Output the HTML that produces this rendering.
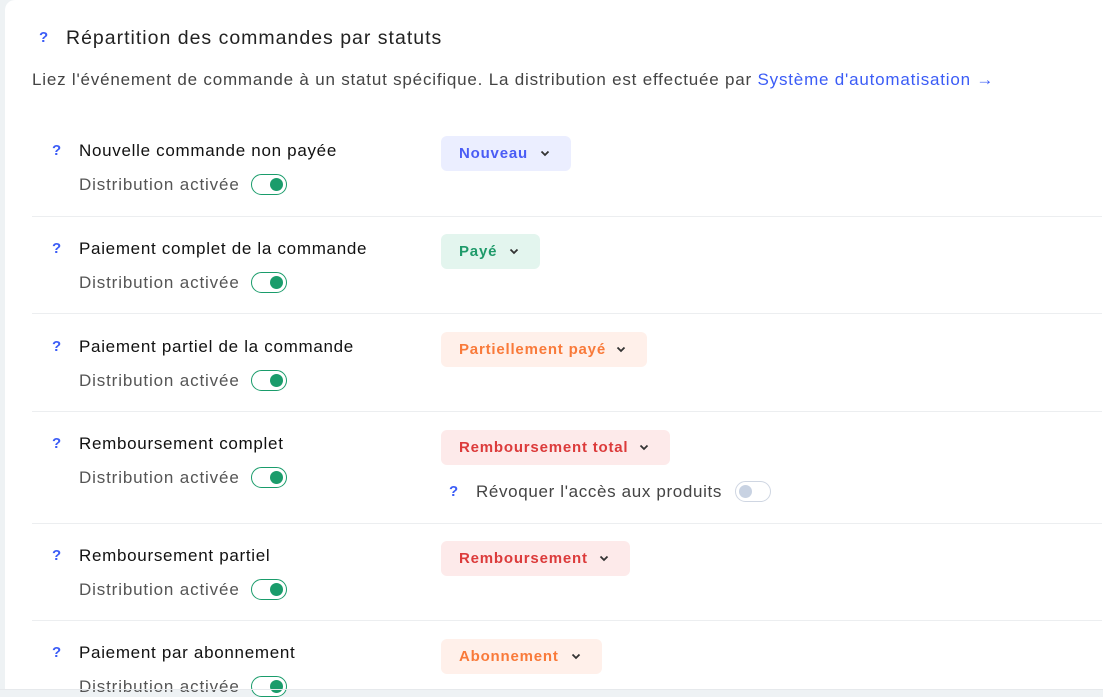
<!DOCTYPE html>
<html><head><meta charset="utf-8">
<style>
*{margin:0;padding:0;box-sizing:border-box}
body{width:1103px;height:690px;overflow:hidden;background:#eef2f4;font-family:"Liberation Sans",sans-serif;position:relative}
.card{position:absolute;left:5px;top:0;width:1098px;height:689px;background:#fff;border-radius:10px 0 0 0}
.a{position:absolute;white-space:nowrap}
.q{color:#3b5cf6;font-weight:bold;font-size:15px}
.lbl{font-size:17px;color:#111;letter-spacing:0.7px}
.dist{font-size:17px;color:#555;letter-spacing:0.85px}
.sep{position:absolute;left:32px;width:1070px;height:1px;background:#eceef0}
.tg{position:absolute;width:36px;height:21px;border:1.5px solid #1a9c6b;border-radius:11px;background:#fff}
.tg::after{content:"";position:absolute;right:3px;top:2.5px;width:13px;height:13px;border-radius:50%;background:#1a9c6b}
.tg.off{border-color:#cfd6e2}
.tg.off::after{left:3px;right:auto;background:#c8d2e2}
.b{position:absolute;left:441px;height:35px;border-radius:6px;font-weight:bold;font-size:15px;line-height:35px;padding-left:18px;letter-spacing:0.8px}
.b svg{position:absolute;top:14px}
</style></head><body>
<div class="card"></div>
<div class="a q" style="left:39px;top:29px">?</div>
<div class="a" style="left:66px;top:27px;font-size:19.5px;color:#222;letter-spacing:1px">Répartition des commandes par statuts</div>
<div class="a" style="left:32px;top:70px;font-size:17px;color:#444;letter-spacing:0.8px">Liez l'événement de commande à un statut spécifique. La distribution est effectuée par <span style="color:#3b5cf6">Système d'automatisation →</span></div>

<div class="a q" style="left:52px;top:142px">?</div>
<div class="a lbl" style="left:79px;top:141px">Nouvelle commande non payée</div>
<div class="a dist" style="left:79px;top:175px">Distribution activée</div>
<div class="tg" style="left:251px;top:174px"></div>
<div class="b" style="top:136px;width:130px;background:#ebeeff;color:#4a5cf5">Nouveau<svg style="left:99px" width="10" height="7" viewBox="0 0 10 7"><path d="M1.5 1.5L5 5L8.5 1.5" stroke="#333" stroke-width="1.8" fill="none"/></svg></div>
<div class="sep" style="top:216px"></div>

<div class="a q" style="left:52px;top:240px">?</div>
<div class="a lbl" style="left:79px;top:239px">Paiement complet de la commande</div>
<div class="a dist" style="left:79px;top:273px">Distribution activée</div>
<div class="tg" style="left:251px;top:272px"></div>
<div class="b" style="top:234px;width:99px;background:#e3f5ee;color:#1f9a6a">Payé<svg style="left:68px" width="10" height="7" viewBox="0 0 10 7"><path d="M1.5 1.5L5 5L8.5 1.5" stroke="#333" stroke-width="1.8" fill="none"/></svg></div>
<div class="sep" style="top:313px"></div>

<div class="a q" style="left:52px;top:338px">?</div>
<div class="a lbl" style="left:79px;top:337px">Paiement partiel de la commande</div>
<div class="a dist" style="left:79px;top:371px">Distribution activée</div>
<div class="tg" style="left:251px;top:370px"></div>
<div class="b" style="top:332px;width:206px;background:#fff0ea;color:#f97a3a">Partiellement payé<svg style="left:175px" width="10" height="7" viewBox="0 0 10 7"><path d="M1.5 1.5L5 5L8.5 1.5" stroke="#333" stroke-width="1.8" fill="none"/></svg></div>
<div class="sep" style="top:411px"></div>

<div class="a q" style="left:52px;top:435px">?</div>
<div class="a lbl" style="left:79px;top:434px">Remboursement complet</div>
<div class="a dist" style="left:79px;top:468px">Distribution activée</div>
<div class="tg" style="left:251px;top:467px"></div>
<div class="b" style="top:430px;width:229px;background:#fdeaea;color:#dc3b3b">Remboursement total<svg style="left:198px" width="10" height="7" viewBox="0 0 10 7"><path d="M1.5 1.5L5 5L8.5 1.5" stroke="#333" stroke-width="1.8" fill="none"/></svg></div>
<div class="a q" style="left:449px;top:483px">?</div>
<div class="a dist" style="left:476px;top:482px;color:#444;letter-spacing:0.65px">Révoquer l'accès aux produits</div>
<div class="tg off" style="left:735px;top:481px"></div>
<div class="sep" style="top:523px"></div>

<div class="a q" style="left:52px;top:547px">?</div>
<div class="a lbl" style="left:79px;top:546px">Remboursement partiel</div>
<div class="a dist" style="left:79px;top:580px">Distribution activée</div>
<div class="tg" style="left:251px;top:579px"></div>
<div class="b" style="top:541px;width:189px;background:#fdeaea;color:#dc3b3b">Remboursement<svg style="left:158px" width="10" height="7" viewBox="0 0 10 7"><path d="M1.5 1.5L5 5L8.5 1.5" stroke="#333" stroke-width="1.8" fill="none"/></svg></div>
<div class="sep" style="top:620px"></div>

<div class="a q" style="left:52px;top:644px">?</div>
<div class="a lbl" style="left:79px;top:643px">Paiement par abonnement</div>
<div class="a dist" style="left:79px;top:677px">Distribution activée</div>
<div class="tg" style="left:251px;top:676px"></div>
<div class="b" style="top:639px;width:161px;background:#fff0ea;color:#f97a3a">Abonnement<svg style="left:130px" width="10" height="7" viewBox="0 0 10 7"><path d="M1.5 1.5L5 5L8.5 1.5" stroke="#333" stroke-width="1.8" fill="none"/></svg></div>
<div style="position:absolute;left:0;top:689px;width:1103px;height:1px;background:#e6e9ec"></div>
</body></html>
